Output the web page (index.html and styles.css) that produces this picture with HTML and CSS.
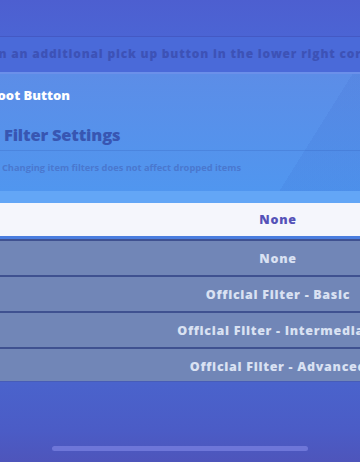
FILE: index.html
```html
<!DOCTYPE html>
<html lang="en">
<head>
  <meta charset="UTF-8">
  <meta name="viewport" content="width=device-width, initial-scale=1.0">
  <title>Item Filter Settings</title>
  <link rel="stylesheet" href="styles.css">
</head>
<body>

<div class="screen">
  <div class="topbar"></div>
  <div class="hint">on an additional pick up button in the lower right corner</div>

  <div class="panel">
    <div class="loot">Loot Button</div>
    <div class="section-title">Filter Settings</div>
    <div class="note">Note: Changing item filters does not affect dropped items</div>
    <div class="strip"></div>
  </div>

  <div class="select">None</div>
  <ul class="options">
    <li>None</li>
    <li>Official Filter - Basic</li>
    <li>Official Filter - Intermediate</li>
    <li>Official Filter - Advanced</li>
  </ul>

  <div class="footer">
    <div class="home-bar"></div>
  </div>
</div>

</body>
</html>
```

FILE: styles.css
```css
body {
  margin: 0;
  padding: 0;
  background-color: #4b5fcc;
  font-family: "Open Sans", Lato, sans-serif;
}
.screen {
  width: 360px;
  height: 462px;
  overflow: hidden;
  display: flex;
  flex-direction: column;
  background: linear-gradient(180deg, #4d5fd0 0%, #4a69d8 15%);
}
.topbar {
  height: 36px;
  flex-shrink: 0;
  border-bottom: 1px solid #4459c4;
}
.hint {
  height: 35px;
  flex-shrink: 0;
  line-height: 34px;
  margin-left: -10px;
  white-space: nowrap;
  font-size: 12px;
  font-weight: 800;
  letter-spacing: 0.8px;
  color: #3d52b6;
  border-bottom: 2px solid #6b90ea;
  background-color: #4a6ad9;
}
.panel {
  flex-shrink: 0;
  height: 129px;
  display: flex;
  flex-direction: column;
  background:
    linear-gradient(122deg, rgba(0, 0, 0, 0) 80%, rgba(30, 60, 170, 0.07) 80%),
    linear-gradient(180deg, #5c8de7 0%, #4f97f0 100%);
}
.loot {
  height: 42px;
  line-height: 42px;
  margin-left: -10px;
  font-size: 13px;
  font-weight: 800;
  color: #fff;
}
.section-title {
  height: 34px;
  line-height: 38px;
  padding-left: 4px;
  font-size: 16.5px;
  font-weight: 800;
  letter-spacing: -0.2px;
  color: #3856b2;
  border-bottom: 1px solid rgba(40, 80, 170, 0.2);
}
.note {
  height: 40px;
  line-height: 34px;
  margin-left: -26px;
  white-space: nowrap;
  font-size: 9.3px;
  font-weight: 700;
  color: #4a78cf;
}
.strip {
  flex: 1;
  background-color: #63a6f6;
}
.select {
  width: 556px;
  height: 33px;
  flex-shrink: 0;
  line-height: 33px;
  text-align: center;
  font-size: 12.5px;
  font-weight: 800;
  letter-spacing: 0.7px;
  color: #5552b8;
  background-color: #f5f6fc;
  border-bottom: 3px solid #4a7ddf;
}
.options {
  list-style-type: none;
  margin: 0;
  padding: 0;
  width: 556px;
  height: 142px;
  flex-shrink: 0;
  overflow: hidden;
  background-color: #7186b7;
}
.options li {
  height: 34px;
  line-height: 35px;
  text-align: center;
  white-space: nowrap;
  font-size: 12.5px;
  font-weight: 800;
  letter-spacing: 0.7px;
  color: #d9e1f2;
  border-top: 2px solid #3f5190;
}
.footer {
  flex: 1;
  display: flex;
  align-items: flex-end;
  justify-content: center;
  padding-bottom: 11px;
  background: linear-gradient(180deg, #4a63cc 0%, #4b5cc6 60%, #4e55bb 100%);
  border-top: 1px solid #475cb8;
}
.home-bar {
  width: 256px;
  height: 5px;
  border-radius: 3px;
  background-color: #6e76d8;
}
```
